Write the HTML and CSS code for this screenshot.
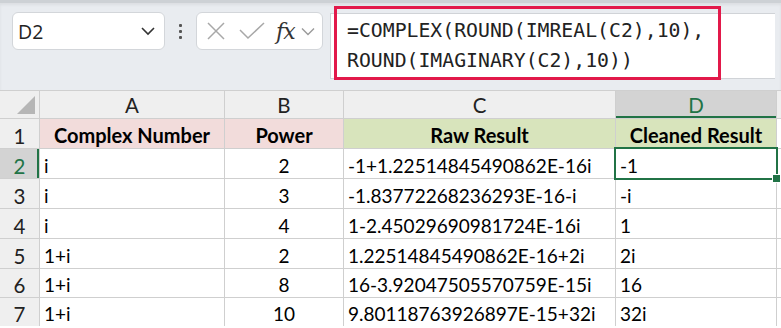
FILE: index.html
```html
<!DOCTYPE html>
<html lang="en">
<head>
  <meta charset="UTF-8" />
  <title>COMPLEX cleanup</title>
  <link rel="stylesheet" href="styles.css">
</head>
<body>
  <div class="topbar">
    <div class="namebox">
      <span>D2</span>
      <svg class="chev" width="16" height="10" viewBox="0 0 16 10"><path d="M2 2 L8 8 L14 2" fill="none" stroke="#333" stroke-width="1.6"/></svg>
    </div>
    <div class="grip"><i></i><i></i><i></i></div>
    <div class="fxbox">
      <svg width="18" height="18" viewBox="0 0 18 18"><path d="M1 1 L17 17 M17 1 L1 17" stroke="#a8a8a8" stroke-width="1.5"/></svg>
      <svg width="26" height="18" viewBox="0 0 26 18"><path d="M1 8 L9 16 L25 1" fill="none" stroke="#a8a8a8" stroke-width="1.5"/></svg>
      <span class="fx">fx</span>
      <svg class="chev" width="14" height="9" viewBox="0 0 14 9"><path d="M1 1.5 L7 7.5 L13 1.5" fill="none" stroke="#9a9a9a" stroke-width="1.4"/></svg>
    </div>
    <div class="formula">
      <div class="formula-text">=COMPLEX(ROUND(IMREAL(C2),10),<br>ROUND(IMAGINARY(C2),10))</div>
    </div>
  </div>

  <div class="sheet">
    <div class="hd corner"><span class="tri"></span></div>
    <div class="hd">A</div>
    <div class="hd">B</div>
    <div class="hd">C</div>
    <div class="hd active-col">D</div>
    <div class="hd"></div>

    <div class="rh">1</div>
    <div class="c title pink">Complex Number</div>
    <div class="c title pink">Power</div>
    <div class="c title green">Raw Result</div>
    <div class="c title green">Cleaned Result</div>
    <div class="c"></div>

    <div class="rh active-row">2</div>
    <div class="c">i</div>
    <div class="c mid">2</div>
    <div class="c">-1+1.22514845490862E-16i</div>
    <div class="c selected">-1<span class="handle"></span></div>
    <div class="c"></div>

    <div class="rh">3</div>
    <div class="c">i</div>
    <div class="c mid">3</div>
    <div class="c">-1.83772268236293E-16-i</div>
    <div class="c">-i</div>
    <div class="c"></div>

    <div class="rh">4</div>
    <div class="c">i</div>
    <div class="c mid">4</div>
    <div class="c">1-2.45029690981724E-16i</div>
    <div class="c">1</div>
    <div class="c"></div>

    <div class="rh">5</div>
    <div class="c">1+i</div>
    <div class="c mid">2</div>
    <div class="c">1.22514845490862E-16+2i</div>
    <div class="c">2i</div>
    <div class="c"></div>

    <div class="rh">6</div>
    <div class="c">1+i</div>
    <div class="c mid">8</div>
    <div class="c">16-3.92047505570759E-15i</div>
    <div class="c">16</div>
    <div class="c"></div>

    <div class="rh">7</div>
    <div class="c">1+i</div>
    <div class="c mid">10</div>
    <div class="c">9.80118763926897E-15+32i</div>
    <div class="c">32i</div>
    <div class="c"></div>
  </div>
</body>
</html>
```

FILE: styles.css
```css
* {
  box-sizing: border-box;
  margin: 0;
  padding: 0;
}

body {
  background: #ffffff;
  font-family: 'Lato', 'Liberation Sans', sans-serif;
  color: #000;
  width: 781px;
  height: 328px;
  overflow: hidden;
}

/* formula bar */
.topbar {
  height: 90px;
  background: #e9ecf0;
  border-top: 3px solid #cdd1d5;
  box-shadow: inset 0 2px 3px rgba(0, 0, 0, 0.06);
  display: flex;
  align-items: flex-start;
  padding: 9px 6px 0 12px;
}

.namebox {
  width: 153px;
  height: 38px;
  background: #fff;
  border: 1px solid #d3d6da;
  border-radius: 6px;
  display: flex;
  align-items: center;
  justify-content: space-between;
  padding: 0 8px 0 5px;
  font-family: 'Open Sans', 'Noto Sans', sans-serif;
  font-size: 19.5px;
  color: #222;
}

.grip {
  width: 31px;
  height: 38px;
  display: flex;
  flex-direction: column;
  align-items: center;
  justify-content: center;
  gap: 3px;
}

.grip i {
  width: 3px;
  height: 3px;
  background: #555;
  border-radius: 1px;
}

.fxbox {
  width: 127px;
  height: 38px;
  background: #fff;
  border: 1px solid #d3d6da;
  border-radius: 6px;
  display: flex;
  align-items: center;
  padding: 0 4px 0 10px;
  gap: 14px;
}

.fxbox .fx {
  font-family: 'DejaVu Serif', 'Liberation Serif', serif;
  font-style: italic;
  font-size: 22px;
  color: #333;
  margin-left: -3px;
  letter-spacing: -1px;
}

.fxbox .chev {
  margin-left: -8px;
}

.formula {
  flex: 1;
  margin-left: 7px;
  margin-top: 1px;
  height: 66px;
  background: #fff;
  border: 1px solid #d0d3d7;
  border-right: none;
}

.formula-text {
  margin: -8px 0 0 3px;
  width: 387px;
  height: 74px;
  border: 3px solid #e2194a;
  padding: 7px 0 0 10px;
  font-family: 'DejaVu Sans Mono', 'Liberation Mono', monospace;
  font-size: 19.8px;
  line-height: 29.5px;
  color: #222;
}

/* grid */
.sheet {
  display: grid;
  grid-template-columns: 39px 184px 118px 271px 160px 1fr;
  grid-template-rows: 27px repeat(5, 29px) 28px 28px;
  gap: 1px;
  background: #cfcfcf;
  border-top: 1px solid #cfcfcf;
  font-size: 19px;
}

.hd, .rh {
  background: #efefef;
  color: #222;
  display: flex;
  align-items: center;
  justify-content: center;
  font-size: 20.5px;
}

.hd {
  padding-top: 1px;
}

.rh {
  align-items: flex-end;
  padding-bottom: 0;
}

.corner {
  position: relative;
}

.tri {
  position: absolute;
  right: 4px;
  bottom: 4px;
  width: 0;
  height: 0;
  border-left: 18px solid transparent;
  border-bottom: 18px solid #b6b6b6;
}

.active-col {
  background: #d3d3d3;
  color: #217346;
  box-shadow: inset 0 -2px 0 #217346;
}

.active-row {
  background: #d3d3d3;
  color: #217346;
  box-shadow: inset -2px 0 0 #217346;
}

.c {
  background: #fff;
  display: flex;
  align-items: flex-end;
  padding: 0 4px 1px;
  white-space: nowrap;
}

.c.mid {
  justify-content: center;
}

.c.title {
  font-weight: 700;
  font-size: 20px;
  justify-content: center;
}

.pink {
  background: #f2dcdb;
}

.green {
  background: #d8e4bc;
}

.selected {
  position: relative;
  box-shadow: 0 0 0 2px #217346;
  z-index: 1;
}

.handle {
  position: absolute;
  right: -5px;
  bottom: -5px;
  width: 9px;
  height: 9px;
  background: #217346;
  border: 1px solid #fff;
}
```
